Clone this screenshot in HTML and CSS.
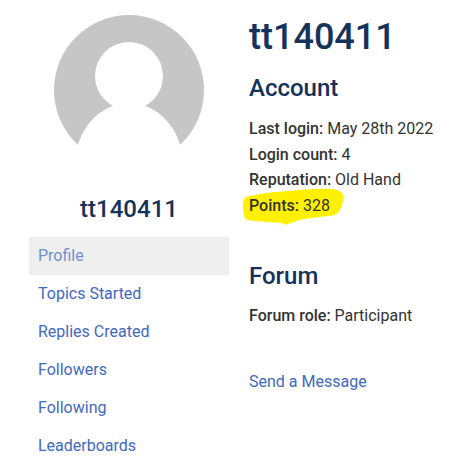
FILE: index.html
```html
<!DOCTYPE html>
<html lang="en">
<head>
    <meta charset="UTF-8">
    <title>tt140411</title>
    <link rel="stylesheet" href="styles.css">
</head>
<body>
    <div class="profile">
        <!-- Left column -->
        <div class="sidebar">
            <div class="avatar">
                <svg width="150" height="150" viewBox="0 0 150 150">
                    <circle cx="75" cy="75" r="75" fill="#c6c6c6"></circle>
                    <circle cx="75" cy="61" r="34" fill="#fff"></circle>
                    <ellipse cx="75" cy="150" rx="54" ry="62" fill="#fff"></ellipse>
                </svg>
            </div>
            <h2 class="username">tt140411</h2>
            <ul class="menu">
                <li class="active"><a href="#">Profile</a></li>
                <li><a href="#">Topics Started</a></li>
                <li><a href="#">Replies Created</a></li>
                <li><a href="#">Followers</a></li>
                <li><a href="#">Following</a></li>
                <li><a href="#">Leaderboards</a></li>
            </ul>
        </div>

        <!-- Right column -->
        <div class="details">
            <h1>tt140411</h1>
            <h3>Account</h3>
            <p><b>Last login:</b> May 28th 2022</p>
            <p><b>Login count:</b> 4</p>
            <p><b>Reputation:</b> Old Hand</p>
            <p class="points">
                <svg class="marker" width="103" height="38" viewBox="20 235 310 115">
                    <path d="M30 262 C70 252 110 248 150 245 C200 240 250 236 290 238 C310 240 322 245 325 258 C327 275 320 298 310 310 C304 316 296 318 288 319 C255 322 225 326 200 330 C180 335 165 342 150 346 C146 344 142 341 138 340 C110 340 85 336 60 335 C48 333 38 332 30 330 C24 318 21 300 22 285 C22 276 25 268 30 262 Z" fill="#fff000"></path>
                </svg>
                <span class="points-text"><b>Points:</b> 328</span>
            </p>
            <h3 class="forum">Forum</h3>
            <p><b>Forum role:</b> Participant</p>
            <a class="message" href="#">Send a Message</a>
        </div>
    </div>
</body>
</html>
```

FILE: styles.css
```css
body {
    font-family: Roboto, sans-serif;
    font-size: 16px;
    color: #333;
    background: #fff;
    margin: 0;
    height: 466px;
    overflow: hidden;
}

.profile {
    display: flex;
    gap: 20px;
    padding: 15px 0 0 29px;
}

.sidebar {
    width: 200px;
}

.avatar {
    display: flex;
    justify-content: center;
    height: 150px;
}

.username {
    font-size: 24px;
    font-weight: 500;
    color: #15325a;
    text-align: center;
    line-height: 28px;
    margin: 30px 0 14px;
}

.menu {
    list-style: none;
    margin: 0;
    padding: 0;
}

.menu li {
    height: 38px;
    line-height: 37px;
    padding-left: 9px;
}

.menu li.active {
    background: #efefef;
}

.menu li.active a {
    color: #6f8fd0;
}

.menu a, .message {
    color: #4169c1;
    text-decoration: none;
}

.details {
    flex: 1;
}

h1 {
    font-size: 36px;
    font-weight: 500;
    color: #15325a;
    line-height: 44px;
    margin: 0 0 15px;
}

h3 {
    font-size: 24px;
    font-weight: 500;
    color: #15325a;
    line-height: 28px;
    margin: 0 0 14px;
}

h3.forum {
    margin: 44px 0 13px;
}

p {
    line-height: 25.6px;
    margin: 0;
}

b {
    font-weight: 500;
}

.points {
    position: relative;
}

.marker {
    position: absolute;
    left: -7px;
    top: -5px;
}

.points-text {
    position: relative;
}

.message {
    display: block;
    margin-top: 43px;
}
```
